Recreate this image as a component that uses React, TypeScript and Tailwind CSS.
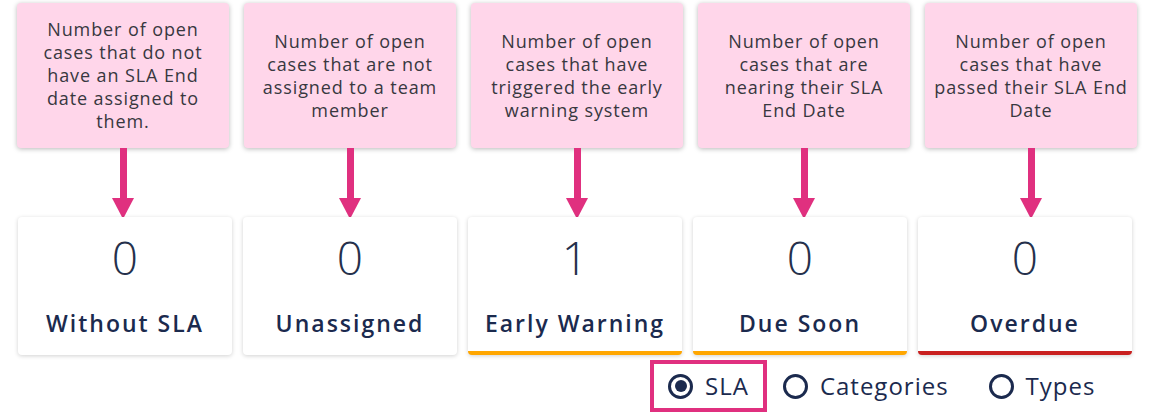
import { useState } from 'react';

type Stat = {
  note: string[];
  value: number;
  label: string;
  bar?: string;
};

const stats: Stat[] = [
  { note: ['Number of open', 'cases that do not', 'have an SLA End', 'date assigned to', 'them.'], value: 0, label: 'Without SLA' },
  { note: ['Number of open', 'cases that are not', 'assigned to a team', 'member'], value: 0, label: 'Unassigned' },
  { note: ['Number of open', 'cases that have', 'triggered the early', 'warning system'], value: 1, label: 'Early Warning', bar: 'border-b-[#ffa600]' },
  { note: ['Number of open', 'cases that are', 'nearing their SLA', 'End Date'], value: 0, label: 'Due Soon', bar: 'border-b-[#ffa600]' },
  { note: ['Number of open', 'cases that have', 'passed their SLA End', 'Date'], value: 0, label: 'Overdue', bar: 'border-b-[#c9201f]' },
];

const groupings = ['SLA', 'Categories', 'Types'];

export default function App() {
  const [grouping, setGrouping] = useState('SLA');

  return (
    <div className="w-[1154px] h-[413px] bg-white overflow-hidden" style={{ fontFamily: '"Open Sans", "Liberation Sans", sans-serif' }}>
      {/* Callouts with arrows */}
      <div className="flex gap-[15px] pl-[17px] pt-[3px]">
        {stats.map((s) => (
          <div key={s.label} className="w-[212px] flex flex-col items-center">
            <div className="w-full h-[145px] bg-[#ffd6ea] rounded-[4px] shadow-[0_1px_5px_rgba(0,0,0,0.28)] flex flex-col items-center justify-center text-center text-[18px] leading-[23px] tracking-[0.9px] text-[#38383f]">
              {s.note.map((line) => (
                <span key={line} className="whitespace-nowrap">{line}</span>
              ))}
            </div>
            <div className="w-[7px] h-[50px] bg-[#e0307f]" />
            <div className="w-0 h-0 border-l-[11px] border-r-[11px] border-t-[21px] border-l-transparent border-r-transparent border-t-[#e0307f]" />
          </div>
        ))}
      </div>

      {/* Stat cards */}
      <div className="flex gap-[11px] pl-[18px] -mt-[2px]">
        {stats.map((s) => (
          <div
            key={s.label}
            className={`w-[214px] h-[138px] bg-white rounded-[4px] shadow-[0_1px_4px_rgba(0,0,0,0.18)] flex flex-col items-center ${s.bar ? `border-b-4 ${s.bar}` : ''}`}
          >
            <div className="mt-[14px] text-[46px] leading-[52px] font-light text-[#25304b]">{s.value}</div>
            <div className="mt-[25px] text-[23px] leading-[30px] font-semibold tracking-[2px] text-[#1b2a4e]">{s.label}</div>
          </div>
        ))}
      </div>

      {/* Grouping switch */}
      <div className="flex items-center pl-[650px] mt-[5px]">
        {groupings.map((g) => (
          <label
            key={g}
            onClick={() => setGrouping(g)}
            className={`flex items-center gap-[12px] h-[52px] cursor-pointer ${g === 'SLA' ? 'border-[4px] border-[#e0307f] pl-[14px] pr-[14px] mr-[16px]' : 'mr-[40px]'}`}
          >
            <span className="w-[25px] h-[25px] rounded-full border-[3px] border-[#1b2a4e] flex items-center justify-center">
              {grouping === g && <span className="w-[12px] h-[12px] rounded-full bg-[#1b2a4e]" />}
            </span>
            <span className="text-[24px] tracking-[1px] text-[#1b2a4e]">{g}</span>
          </label>
        ))}
      </div>
    </div>
  );
}
